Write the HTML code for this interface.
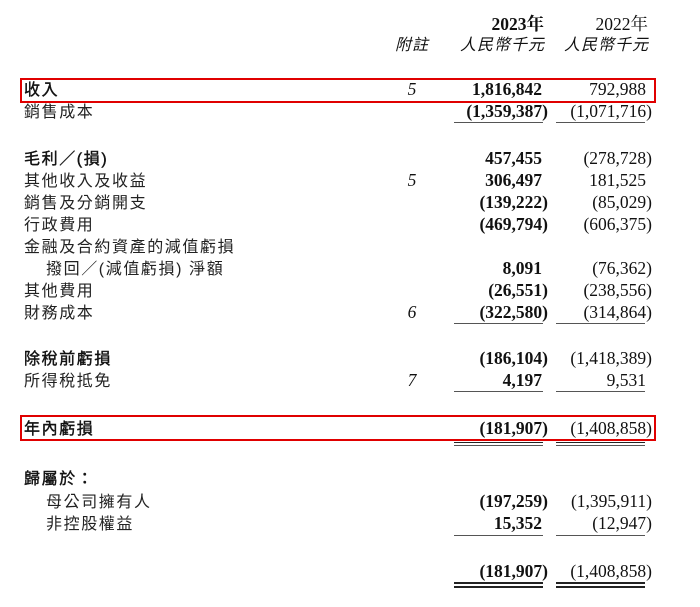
<!DOCTYPE html><html><head><meta charset="utf-8"><style>
body{margin:0;width:700px;height:607px;background:#fff;position:relative;overflow:hidden;font-family:"Liberation Serif","Noto Serif CJK SC",serif;font-size:17.5px;color:#111}
.r{position:absolute;left:0;width:700px;height:22px;line-height:22px}
.l{position:absolute;left:24px;top:2px;font-family:"Liberation Sans","Noto Sans CJK TC",sans-serif;font-size:16px;letter-spacing:1.6px;color:#222}
.k{-webkit-text-stroke:0.4px #111;color:#111}
.i{left:46px}
.n{position:absolute;left:400px;width:24px;text-align:center;font-style:italic}
.a{position:absolute;right:152px;font-weight:bold}
.b{position:absolute;right:48px}
.p{padding-right:6px}
.u{position:absolute;height:1px;background:#555}
.box{position:absolute;left:20px;width:636px;border:2px solid #e00000;box-sizing:border-box}
.h{position:absolute;line-height:20px}
.c{font-style:italic;font-family:'Liberation Sans','Noto Sans CJK TC',sans-serif;font-size:16px;letter-spacing:1px}
</style></head><body>
<div class="h" style="top:14px;right:156px;font-weight:bold">2023年</div>
<div class="h" style="top:14px;right:52px">2022年</div>
<div class="h c" style="top:36px;left:395px">附註</div>
<div class="h c" style="top:36px;right:155px">人民幣千元</div>
<div class="h c" style="top:36px;right:51px">人民幣千元</div>

<div class="box" style="top:78px;height:25px"></div>
<div class="r" style="top:78px"><span class="l k">收入</span><span class="n">5</span><span class="a p">1,816,842</span><span class="b p">792,988</span></div>
<div class="r" style="top:100px"><span class="l">銷售成本</span><span class="a">(1,359,387)</span><span class="b">(1,071,716)</span></div>
<div class="u" style="top:122px;left:454px;width:89px"></div><div class="u" style="top:122px;left:556px;width:89px"></div>

<div class="r" style="top:147px"><span class="l k">毛利／(損)</span><span class="a p">457,455</span><span class="b">(278,728)</span></div>
<div class="r" style="top:169px"><span class="l">其他收入及收益</span><span class="n">5</span><span class="a p">306,497</span><span class="b p">181,525</span></div>
<div class="r" style="top:191px"><span class="l">銷售及分銷開支</span><span class="a">(139,222)</span><span class="b">(85,029)</span></div>
<div class="r" style="top:213px"><span class="l">行政費用</span><span class="a">(469,794)</span><span class="b">(606,375)</span></div>
<div class="r" style="top:235px"><span class="l">金融及合約資產的減值虧損</span></div>
<div class="r" style="top:257px"><span class="l i">撥回／(減值虧損) 淨額</span><span class="a p">8,091</span><span class="b">(76,362)</span></div>
<div class="r" style="top:279px"><span class="l">其他費用</span><span class="a">(26,551)</span><span class="b">(238,556)</span></div>
<div class="r" style="top:301px"><span class="l">財務成本</span><span class="n">6</span><span class="a">(322,580)</span><span class="b">(314,864)</span></div>
<div class="u" style="top:323px;left:454px;width:89px"></div><div class="u" style="top:323px;left:556px;width:89px"></div>

<div class="r" style="top:347px"><span class="l k">除稅前虧損</span><span class="a">(186,104)</span><span class="b">(1,418,389)</span></div>
<div class="r" style="top:369px"><span class="l">所得稅抵免</span><span class="n">7</span><span class="a p">4,197</span><span class="b p">9,531</span></div>
<div class="u" style="top:391px;left:454px;width:89px"></div><div class="u" style="top:391px;left:556px;width:89px"></div>

<div class="box" style="top:415px;height:26px"></div>
<div class="r" style="top:417px"><span class="l k">年內虧損</span><span class="a">(181,907)</span><span class="b">(1,408,858)</span></div>
<div class="u" style="top:442px;left:454px;width:89px;background:#222"></div><div class="u" style="top:442px;left:556px;width:89px;background:#222"></div>
<div class="u" style="top:445px;left:454px;width:89px"></div><div class="u" style="top:445px;left:556px;width:89px"></div>

<div class="r" style="top:467px"><span class="l k">歸屬於：</span></div>
<div class="r" style="top:490px"><span class="l i">母公司擁有人</span><span class="a">(197,259)</span><span class="b">(1,395,911)</span></div>
<div class="r" style="top:512px"><span class="l i">非控股權益</span><span class="a p">15,352</span><span class="b">(12,947)</span></div>
<div class="u" style="top:535px;left:454px;width:89px"></div><div class="u" style="top:535px;left:556px;width:89px"></div>

<div class="r" style="top:560px"><span class="a">(181,907)</span><span class="b">(1,408,858)</span></div>
<div class="u" style="top:582px;left:454px;width:89px;height:2px;background:#222"></div><div class="u" style="top:582px;left:556px;width:89px;height:2px;background:#222"></div>
<div class="u" style="top:586px;left:454px;width:89px;height:2px;background:#222"></div><div class="u" style="top:586px;left:556px;width:89px;height:2px;background:#222"></div>
</body></html>
